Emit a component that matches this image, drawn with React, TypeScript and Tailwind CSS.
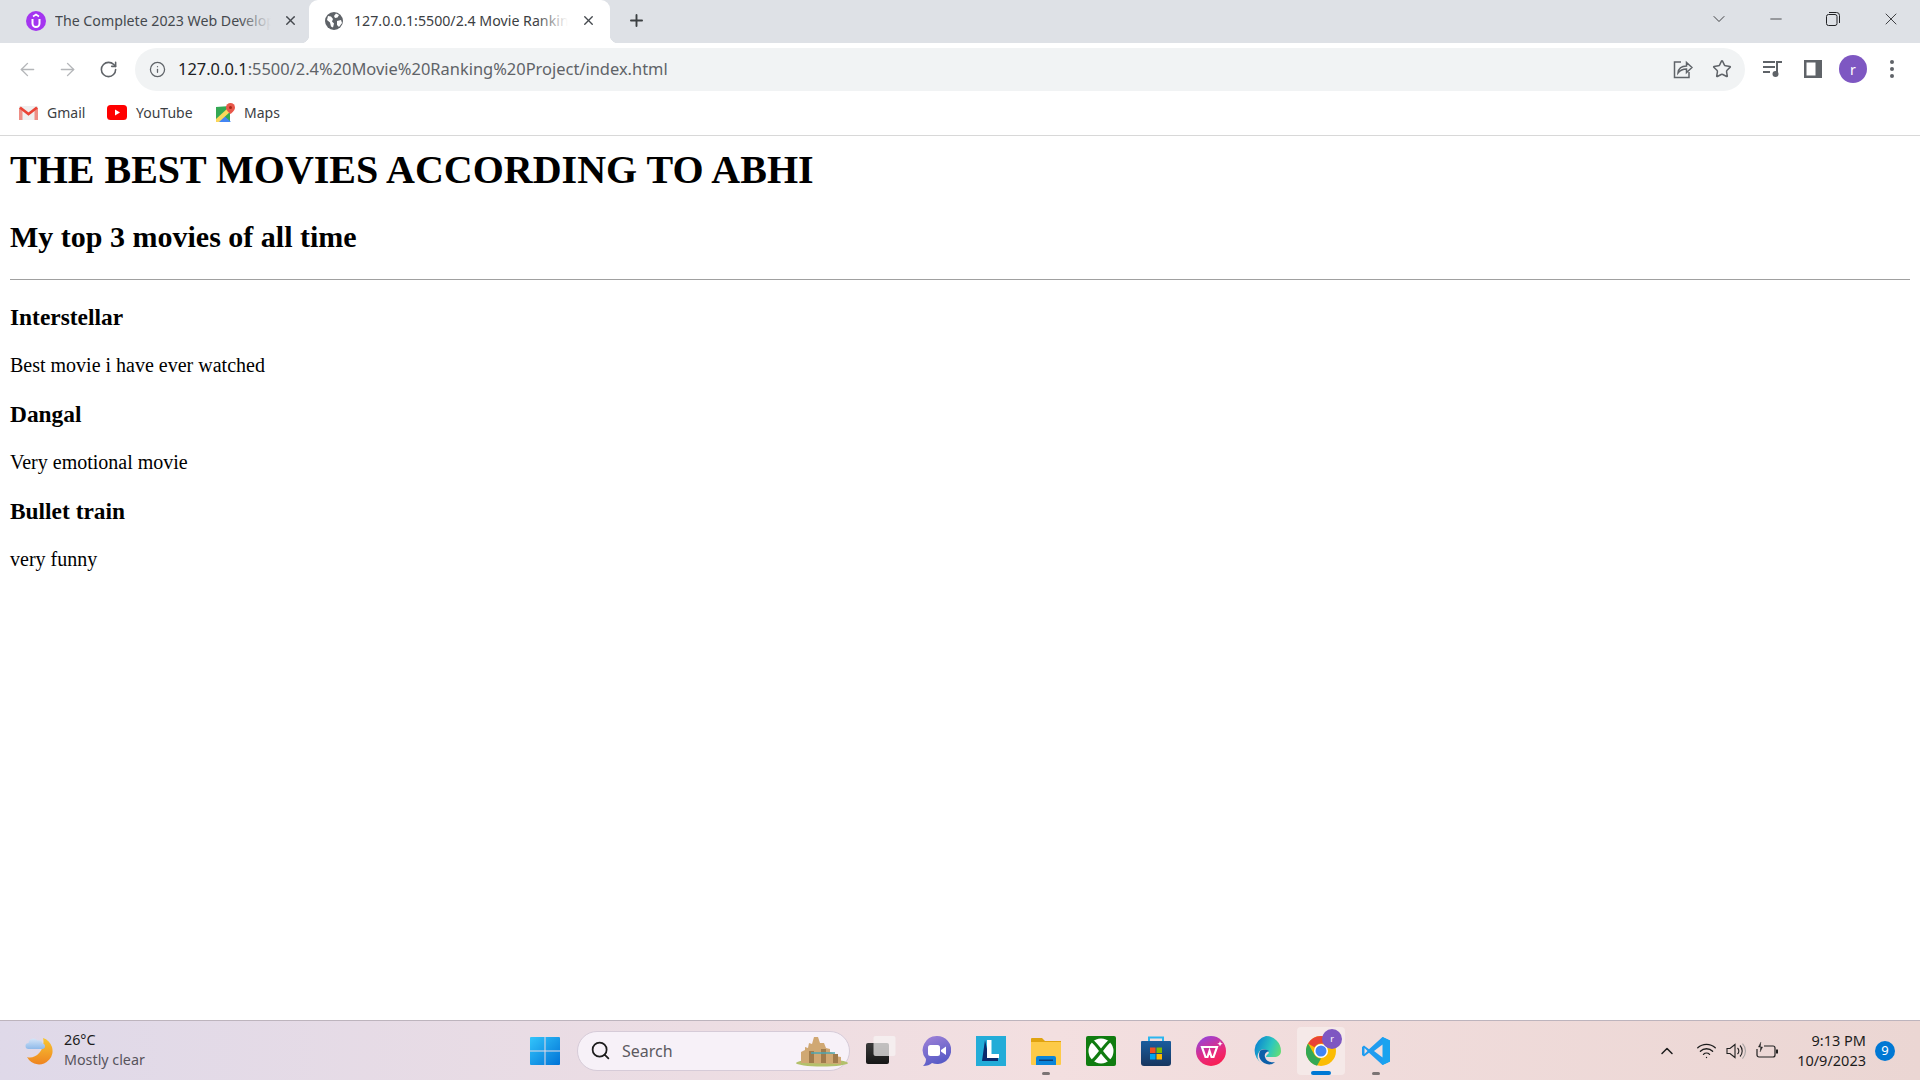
import { ArrowLeft, ArrowRight, ChevronDown, ChevronUp, Info, Minus, Plus, RotateCw, Search, Star, Wifi, X } from "lucide-react"

const ui = "font-['Noto_Sans',sans-serif]"

function TabTitle({ text, width, fade }: { text: string; width: string; fade: string }) {
  return (
    <div className={`relative overflow-hidden whitespace-nowrap text-[14.200px] ${width}`}>
      {text}
      <div className={`absolute inset-y-0 right-0 w-8 bg-gradient-to-r from-transparent via-70% ${fade}`}></div>
    </div>
  )
}

function UdemyFavicon() {
  return (
    <svg width="20" height="20" viewBox="0 0 20 20" className="ml-[26px] mr-[9px] shrink-0">
      <circle cx="10" cy="10" r="10" fill="#a435f0" />
      <path d="M6.5 8v4.5a3.5 3.5 0 0 0 7 0V8" fill="none" stroke="#fff" strokeWidth="2" />
      <path d="M7 5.5 10 3.5l3 2" fill="none" stroke="#fff" strokeWidth="1.6" />
    </svg>
  )
}

function GlobeFavicon() {
  return (
    <svg width="18" height="18" viewBox="0 0 18 18" className="ml-[16px] mr-[11px] shrink-0">
      <circle cx="9" cy="9" r="9" fill="#5f6368" />
      <path d="M3 4l3 .5 2 2.500-1 2.500 2 2-1 4-2-1-1-4-3-2.500zM11 1.500l3 1.500-1.500 2.500-2.500.5-1-2zM12 9l4-1 1 3-3 4-2-2z" fill="#fff" />
    </svg>
  )
}

function GmailIcon() {
  return (
    <svg width="19" height="14" viewBox="0 0 19 14">
      <rect width="19" height="14" rx="1" fill="#efefef" />
      <path d="M0 1.500V14h3.500V4zM19 1.500V14h-3.500V4z" fill="#ee8e85" />
      <path d="M1 1.500 9.500 8 18 1.500" fill="none" stroke="#ea4335" strokeWidth="2.600" />
    </svg>
  )
}

function YoutubeIcon() {
  return (
    <svg width="20" height="15" viewBox="0 0 20 15">
      <rect width="20" height="15" rx="3.500" fill="#ff0000" />
      <path d="M8 4.500v6l5-3z" fill="#fff" />
    </svg>
  )
}

function MapsIcon() {
  return (
    <svg width="19" height="19" viewBox="0 0 19 19">
      <path d="M0 4 14 3v16H1a1 1 0 0 1-1-1z" fill="#34a853" />
      <path d="M6 11l9 8H1z" fill="#4285f4" />
      <path d="M0 16 12 5l3 3L3 19H0z" fill="#fbd75b" />
      <path d="M14.500 0A4.500 4.500 0 0 1 19 4.500C19 8 14.500 11 14.500 11S10 8 10 4.500A4.500 4.500 0 0 1 14.500 0z" fill="#e8574a" />
      <circle cx="14.500" cy="4.500" r="1.500" fill="#a52714" />
    </svg>
  )
}

function ShareIcon() {
  return (
    <svg width="20" height="20" viewBox="0 0 20 20" fill="none" stroke="#5f6368" strokeWidth="1.500">
      <path d="M8 3H1.500v15.500H16V13" />
      <path d="M5 14c.500-4.500 4-7 8.500-7V3.500L19 8.500l-5.500 5V10C10 10 7 11.500 5 14z" />
    </svg>
  )
}

function MediaIcon() {
  return (
    <svg width="20" height="18" viewBox="0 0 20 18" fill="#5f6368">
      <rect x="0" y="1" width="12" height="2" />
      <rect x="0" y="6" width="12" height="2" />
      <rect x="0" y="11" width="7" height="2" />
      <rect x="13" y="1" width="6" height="2" />
      <rect x="13" y="1" width="2" height="13" />
      <circle cx="12.500" cy="14" r="3" />
    </svg>
  )
}

function SidePanelIcon() {
  return (
    <svg width="18" height="18" viewBox="0 0 18 18">
      <rect width="18" height="18" fill="#5f6368" />
      <rect x="2.500" y="2.500" width="9" height="13" fill="#fff" />
    </svg>
  )
}

function RestoreIcon() {
  return (
    <svg width="14" height="14" viewBox="0 0 14 14" fill="none" stroke="#202124">
      <rect x=".5" y="2.500" width="10.500" height="11" rx="2" />
      <path d="M3 .5h7.500a3 3 0 0 1 3 3V11" />
    </svg>
  )
}

function Bookmark({ icon, label, width }: { icon: React.ReactNode; label: string; width: string }) {
  return (
    <div className={`flex items-center ${width}`}>
      <div className="flex w-[20px] shrink-0 items-center justify-center">{icon}</div>
      <span className="ml-[9px] text-[14px] text-[#3c4043]">{label}</span>
    </div>
  )
}

function BrowserChrome() {
  return (
    <div className={`${ui} shrink-0`}>
      <div className="flex h-[43px] bg-[#dee1e6]">
        <div className="flex w-[309px] items-center pb-[2px] text-[#45494e]">
          <UdemyFavicon />
          <TabTitle text="The Complete 2023 Web Development Bootcamp" width="w-[216px]" fade="to-[#dee1e6]" />
          <X size={15} strokeWidth={2.2} className="ml-[12px] text-[#45494e]" />
        </div>
        <div className="relative flex w-[301px] items-center rounded-t-[9px] bg-white pb-[2px] text-[#3c4043]">
          <div className="absolute bottom-0 left-[-8px] h-[8px] w-[8px] bg-[radial-gradient(circle_at_0_0,transparent_8px,white_8.500px)]"></div>
          <div className="absolute bottom-0 right-[-8px] h-[8px] w-[8px] bg-[radial-gradient(circle_at_100%_0,transparent_8px,white_8.500px)]"></div>
          <GlobeFavicon />
          <TabTitle text="127.0.0.1:5500/2.4 Movie Ranking Project" width="w-[214px]" fade="to-white" />
          <X size={15} strokeWidth={2.2} className="ml-[13px] text-[#45494e]" />
        </div>
        <Plus size={19} strokeWidth={2.4} className="ml-[17px] mb-[2px] self-center text-[#3c4043]" />
        <div className="ml-auto flex items-center pb-[5px] pr-[19px] text-[#202124]">
          <ChevronDown size={20} strokeWidth={1} />
          <Minus size={18} strokeWidth={1} className="ml-[38px]" />
          <div className="ml-[41px]"><RestoreIcon /></div>
          <X size={20} strokeWidth={1} className="ml-[41px]" />
        </div>
      </div>

      <div className="flex h-[52px] items-center bg-white">
        <ArrowLeft size={21} strokeWidth={1.6} className="ml-[17px] text-[#b4b6b9]" />
        <ArrowRight size={21} strokeWidth={1.6} className="ml-[19px] text-[#b4b6b9]" />
        <RotateCw size={19} strokeWidth={2} className="ml-[21px] text-[#5f6368]" />
        <div className="ml-[17px] flex h-[43px] w-[1610px] items-center rounded-full bg-[#f1f3f4]">
          <Info size={17} strokeWidth={1.8} className="ml-[14px] text-[#5f6368]" />
          <div className="ml-[12px] text-[16.440px] text-[#5f6368]">
            <span className="text-[#202124]">127.0.0.1</span>:5500/2.4%20Movie%20Ranking%20Project/index.html
          </div>
          <div className="ml-auto flex items-center pr-[13px]">
            <ShareIcon />
            <Star size={20} strokeWidth={1.8} className="ml-[19px] text-[#5f6368]" />
          </div>
        </div>
        <div className="ml-[18px]"><MediaIcon /></div>
        <div className="ml-[21px]"><SidePanelIcon /></div>
        <div className="ml-[17px] flex h-[28px] w-[28px] items-center justify-center rounded-full bg-[#7e57c2] text-[14px] text-white">r</div>
        <div className="ml-[23px] flex flex-col gap-[3px]">
          <div className="h-[4px] w-[4px] rounded-full bg-[#5f6368]"></div>
          <div className="h-[4px] w-[4px] rounded-full bg-[#5f6368]"></div>
          <div className="h-[4px] w-[4px] rounded-full bg-[#5f6368]"></div>
        </div>
      </div>

      <div className="flex h-[41px] items-center border-b border-[#d8d8d8] bg-white pb-[5px] pl-[18px]">
        <Bookmark icon={<GmailIcon />} label="Gmail" width="w-[89px]" />
        <Bookmark icon={<YoutubeIcon />} label="YouTube" width="w-[108px]" />
        <Bookmark icon={<MapsIcon />} label="Maps" width="w-[80px]" />
      </div>
    </div>
  )
}

function WeatherIcon() {
  return (
    <svg width="30" height="29" viewBox="0 0 30 29">
      <defs>
        <linearGradient id="moon" x1="0" y1="0" x2="0" y2="1">
          <stop offset="0" stopColor="#f7c733" />
          <stop offset="1" stopColor="#ef8420" />
        </linearGradient>
        <linearGradient id="cloud" x1="0" y1="0" x2="0" y2="1">
          <stop offset="0" stopColor="#d5e5f8" />
          <stop offset="1" stopColor="#8fbaea" />
        </linearGradient>
      </defs>
      <path d="M18 2A13.500 13.500 0 1 1 2 21C10 24 21 14 18 2z" fill="url(#moon)" />
      <path d="M3.500 13a3 3 0 0 1 0-6 5 5 0 0 1 9-2.500 3.500 3.500 0 0 1 5 3 2.800 2.800 0 0 1 .5 5.500z" fill="url(#cloud)" />
    </svg>
  )
}

function WindowsLogo() {
  return (
    <svg width="30" height="30" viewBox="0 0 30 30">
      <defs>
        <linearGradient id="win" x1="0" y1="0" x2="1" y2="1">
          <stop offset="0" stopColor="#33c5fb" />
          <stop offset="1" stopColor="#0072d6" />
        </linearGradient>
      </defs>
      <path d="M1 1h13.500v13.500H0V2a1 1 0 0 1 1-1zM15.500 1H29a1 1 0 0 1 1 1v12.500H15.500zM0 15.500h14.500V29H1a1 1 0 0 1-1-1zM15.500 15.500H30V28a1 1 0 0 1-1 1H15.500z" fill="url(#win)" />
    </svg>
  )
}

function CastleIcon() {
  return (
    <svg width="54" height="32" viewBox="0 0 54 32">
      <ellipse cx="27" cy="28" rx="26" ry="3.500" fill="#b3c06b" />
      <path d="M6 28V17l4-2V12l3 1 1-5 3 1 2-7 4 0 2 6h4l2 5 4 1v3l3 1 2 3 6 1v7z" fill="#d0a873" />
      <path d="M14 28V16h5v12zM26 28V14h5v14zM38 28V19h5v9z" fill="#a07b4c" />
      <path d="M16 18h24" stroke="#4ba7b5" strokeWidth="1.500" />
    </svg>
  )
}

function TaskViewIcon() {
  return (
    <svg width="30" height="29" viewBox="0 0 30 29">
      <defs>
        <linearGradient id="tvb" x1="0" y1="0" x2="0" y2="1">
          <stop offset="0" stopColor="#3a3a3a" />
          <stop offset="1" stopColor="#161616" />
        </linearGradient>
      </defs>
      <rect x="0" y="7" width="23" height="21" rx="2" fill="url(#tvb)" />
      <rect x="7.500" y="0" width="22" height="20" rx="2" fill="#f6f4f4" fillOpacity=".72" />
    </svg>
  )
}

function ChatIcon() {
  return (
    <svg width="30" height="31" viewBox="0 0 30 31">
      <defs>
        <linearGradient id="chat" x1="0.300" y1="0" x2="0.700" y2="1">
          <stop offset="0" stopColor="#9a7fd6" />
          <stop offset="1" stopColor="#4f56c4" />
        </linearGradient>
      </defs>
      <path d="M16 1a14 14 0 1 1-5 27c-2 2-5 3-9 3 2-2 3-4 3-7A14 14 0 0 1 16 1z" fill="url(#chat)" />
      <rect x="7" y="10" width="12" height="11" rx="2.500" fill="#fff" />
      <path d="M20 15l5-3.500v8.500l-5-3.500z" fill="#fff" />
    </svg>
  )
}

function LIcon() {
  return (
    <svg width="30" height="30" viewBox="0 0 30 30">
      <rect width="30" height="30" fill="#23acd8" />
      <path d="M9 4 6 25h16v-3H13z" fill="#0b2a6e" />
      <path d="M11 4h4.500v14H23v4H11z" fill="#fff" />
    </svg>
  )
}

function FolderIcon() {
  return (
    <svg width="30" height="28" viewBox="0 0 30 28">
      <path d="M0 2a1 1 0 0 1 1-1h10l3 3h16v4H0z" fill="#e0a30f" />
      <path d="M0 5h30v22a1 1 0 0 1-1 1H1a1 1 0 0 1-1-1z" fill="#fdca47" />
      <path d="M5 28v-7a2 2 0 0 1 2-2h16a2 2 0 0 1 2 2v7z" fill="#0a85d9" />
      <rect x="8" y="22.500" width="14" height="1.500" fill="#0b3f78" />
    </svg>
  )
}

function XboxIcon() {
  return (
    <svg width="30" height="30" viewBox="0 0 30 30">
      <rect width="30" height="30" rx="2" fill="#107c10" />
      <circle cx="15" cy="15" r="12.500" fill="#fff" />
      <path d="M6 5C11 8 19 22 24 25M24 5C19 8 11 22 6 25" fill="none" stroke="#107c10" strokeWidth="3.200" />
    </svg>
  )
}

function StoreIcon() {
  return (
    <svg width="30" height="30" viewBox="0 0 30 30">
      <defs>
        <linearGradient id="store" x1="0" y1="0" x2="0" y2="1">
          <stop offset="0" stopColor="#1a5d9e" />
          <stop offset="1" stopColor="#173660" />
        </linearGradient>
      </defs>
      <path d="M8 6V1.500h14V6" fill="none" stroke="#2bb6ef" strokeWidth="2" />
      <path d="M1 5h28a1 1 0 0 1 1 1v21a3 3 0 0 1-3 3H3a3 3 0 0 1-3-3V6a1 1 0 0 1 1-1z" fill="url(#store)" />
      <rect x="9" y="11.500" width="5.500" height="5.500" fill="#f25022" />
      <rect x="15.500" y="11.500" width="5.500" height="5.500" fill="#7fba00" />
      <rect x="9" y="18" width="5.500" height="5.500" fill="#00a4ef" />
      <rect x="15.500" y="18" width="5.500" height="5.500" fill="#ffb900" />
    </svg>
  )
}

function WpsIcon() {
  return (
    <svg width="30" height="30" viewBox="0 0 30 30">
      <defs>
        <linearGradient id="wps" x1="0.200" y1="0" x2="0.700" y2="1">
          <stop offset="0" stopColor="#9344dd" />
          <stop offset=".6" stopColor="#e82a7c" />
          <stop offset="1" stopColor="#fb1c4d" />
        </linearGradient>
      </defs>
      <circle cx="15" cy="15" r="15" fill="url(#wps)" />
      <path d="M6 11h15l-3.500 10h-2L13.500 15 11.500 21h-2z" fill="none" stroke="#fff" strokeWidth="2.200" />
      <path d="M24 5l.8 2 2 .8-2 .8-.8 2-.8-2-2-.8 2-.8z" fill="#fff" />
    </svg>
  )
}

function EdgeIcon() {
  return (
    <svg width="30" height="30" viewBox="0 0 30 30">
      <defs>
        <linearGradient id="edge" x1="0" y1="0.300" x2="1" y2="0.700">
          <stop offset="0" stopColor="#0c84d0" />
          <stop offset=".55" stopColor="#2cc6c0" />
          <stop offset="1" stopColor="#6be06a" />
        </linearGradient>
      </defs>
      <path d="M15 0a15 15 0 0 1 15 15c0 4-3 6-7 6h-8c0-2 2-3 3-4-1-3-5-5-8-3-3 2-4 6-3 9 1 2 3 4 5 5A15 15 0 0 1 15 0z" fill="url(#edge)" />
      <path d="M9 15c-2 4-1 9 4 12 4 2 8 2 11-1-5 1-9-1-10-5-1-3 1-5 4-6-3-2-7-2-9 0z" fill="#0b5fa8" />
    </svg>
  )
}

function ChromeIcon() {
  return (
    <svg width="30" height="30" viewBox="0 0 30 30">
      <circle cx="15" cy="15" r="15" fill="#fbbc04" />
      <path d="M15 0A15 15 0 0 1 28 7.500H15a7.500 7.500 0 0 0-6.500 3.800L2 7.500A15 15 0 0 1 15 0z" fill="#ea4335" />
      <path d="M2 7.500 8.500 18.800a7.500 7.500 0 0 0 6.500 3.700l-4 7.200A15 15 0 0 1 2 7.500z" fill="#34a853" />
      <circle cx="15" cy="15" r="7" fill="#fff" />
      <circle cx="15" cy="15" r="5.500" fill="#4285f4" />
    </svg>
  )
}

function VscodeIcon() {
  return (
    <svg width="30" height="30" viewBox="0 0 30 30">
      <path d="M21.500 1 29 4.500v21L21.500 29 8 16.800 3 20.500 1 19v-8l2-1.500 5 3.700z" fill="#1f9cf0" />
      <path d="M21.500 1 29 4.500v21L21.500 29z" fill="#1aa3ef" />
      <path d="M21.500 8.500 13 15l8.500 6.500z" fill="#f1dede" />
      <path d="M3.500 12 6.500 15l-3 3z" fill="#f1dede" />
    </svg>
  )
}

function BatteryIcon() {
  return (
    <svg width="22" height="20" viewBox="0 0 22 20" fill="none" stroke="#202020" strokeWidth="1.200">
      <path d="M8 5h9a2 2 0 0 1 2 2v7a2 2 0 0 1-2 2H3a2 2 0 0 1-2-2V8" />
      <path d="M20 9h1.500v3H20" fill="#202020" />
      <path d="M5 1 2.500 6h4L4 11" fill="#202020" strokeWidth=".5" />
    </svg>
  )
}

function VolumeIcon() {
  return (
    <svg width="20" height="18" viewBox="0 0 20 18" fill="none" stroke="#202020" strokeWidth="1.100">
      <path d="M1 6.500h3L9 2.500v13l-5-4H1z" />
      <path d="M11.500 6a4 4 0 0 1 0 6" />
      <path d="M14 3.500a8 8 0 0 1 0 11" />
      <path d="M16.500 1.500a11 11 0 0 1 0 15" stroke="#a8a4a4" />
    </svg>
  )
}

function TaskIcon({ children, dot, active }: { children: React.ReactNode; dot?: boolean; active?: boolean }) {
  return (
    <div className={`relative mx-[3.500px] flex h-[48px] w-[48px] items-center justify-center rounded-[4px] ${active ? "bg-[#f5e9e8]" : ""}`}>
      {children}
      {dot && <div className="absolute bottom-[0px] h-[3px] w-[8px] rounded-full bg-[#7b7474]"></div>}
      {active && <div className="absolute bottom-[0px] h-[4px] w-[20px] rounded-full bg-[#0078d4]"></div>}
    </div>
  )
}

function Taskbar() {
  return (
    <div className={`${ui} flex h-[60px] shrink-0 items-center border-t border-[#bdb4bd] bg-gradient-to-r from-[#dfd9e9] via-[#f3dfe0] via-55% to-[#ebd6d3]`}>
      <div className="ml-[25px] flex w-[505px] items-center">
        <WeatherIcon />
        <div className="ml-[9px] flex flex-col pb-[2px] text-[14.300px] leading-[20px]">
          <span className="text-[#1c1c1c]">26°C</span>
          <span className="text-[#57545c]">Mostly clear</span>
        </div>
      </div>
      <WindowsLogo />
      <div className="ml-[17px] flex h-[40px] w-[273px] items-center rounded-full border border-[#d6cbd8] bg-[#f7f1f8]">
        <Search size={21} strokeWidth={2} className="ml-[12px] text-[#1c1c1c]" />
        <span className="ml-[11px] text-[16px] text-[#5c5960]">Search</span>
        <div className="ml-auto"><CastleIcon /></div>
      </div>
      <div className="ml-[3.500px] flex items-center">
        <TaskIcon><TaskViewIcon /></TaskIcon>
        <TaskIcon><ChatIcon /></TaskIcon>
        <TaskIcon><LIcon /></TaskIcon>
        <TaskIcon dot><FolderIcon /></TaskIcon>
        <TaskIcon><XboxIcon /></TaskIcon>
        <TaskIcon><StoreIcon /></TaskIcon>
        <TaskIcon><WpsIcon /></TaskIcon>
        <TaskIcon><EdgeIcon /></TaskIcon>
        <TaskIcon active>
          <ChromeIcon />
          <div className="absolute right-[3px] top-[2px] flex h-[20px] w-[20px] items-center justify-center rounded-full bg-[#7e57c2] text-[9px] text-white">r</div>
        </TaskIcon>
        <TaskIcon dot><VscodeIcon /></TaskIcon>
      </div>
      <div className="ml-auto flex items-center pr-[25px] text-[#1c1c1c]">
        <ChevronUp size={20} strokeWidth={1.8} />
        <Wifi size={21} strokeWidth={1.5} className="ml-[19px]" />
        <div className="ml-[9px]"><VolumeIcon /></div>
        <div className="ml-[10px]"><BatteryIcon /></div>
        <div className="ml-[19px] flex flex-col items-end pb-[2px] text-[14.500px] leading-[20px]">
          <span>9:13 PM</span>
          <span>10/9/2023</span>
        </div>
        <div className="ml-[9px] flex h-[20px] w-[20px] items-center justify-center rounded-full bg-[#0078d4] text-[13px] text-white">9</div>
      </div>
    </div>
  )
}

export default function App() {
  return (
    <div className="flex h-screen flex-col overflow-hidden bg-white">
      <BrowserChrome />
      <main className="flex-1 px-[10px] pt-[11px] font-['Liberation_Serif',serif] text-black">
        <h1 className="text-[40px] font-bold leading-[46px]">THE BEST MOVIES ACCORDING TO ABHI</h1>
        <h2 className="mt-[26px] text-[30px] font-bold leading-[35px]">My top 3 movies of all time</h2>
        <hr className="mt-[25px] border-t border-[#a0a0a0]" />
        <h3 className="mt-[24px] text-[23.400px] font-bold leading-[27px]">Interstellar</h3>
        <p className="mt-[23px] text-[20px] leading-[23px]">Best movie i have ever watched</p>
        <h3 className="mt-[23.500px] text-[23.400px] font-bold leading-[27px]">Dangal</h3>
        <p className="mt-[23.500px] text-[20px] leading-[23px]">Very emotional movie</p>
        <h3 className="mt-[23.500px] text-[23.400px] font-bold leading-[27px]">Bullet train</h3>
        <p className="mt-[23.500px] text-[20px] leading-[23px]">very funny</p>
      </main>
      <Taskbar />
    </div>
  )
}
